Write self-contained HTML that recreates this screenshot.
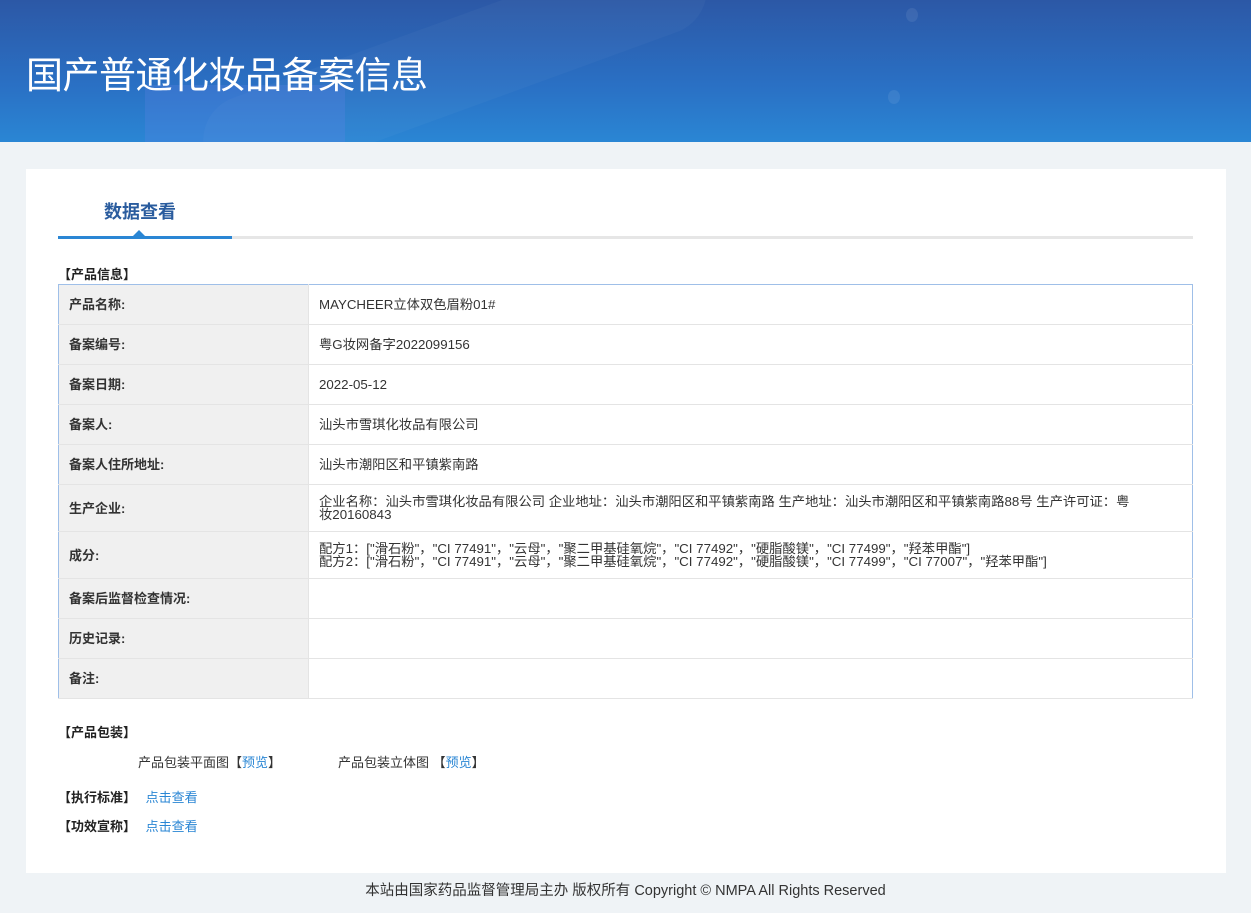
<!DOCTYPE html>
<html><head><meta charset="utf-8"><style>
*{margin:0;padding:0;box-sizing:border-box}
body{width:1251px;height:913px;background:#eff3f6;font-family:"Liberation Sans","Noto Sans CJK SC",sans-serif;color:#333;font-size:13px;position:relative;overflow:hidden}
.hdr{height:142px;background:linear-gradient(180deg,#2c58a6 0%,#2a70c4 60%,#2a86d4 100%);position:relative;overflow:hidden}
.hdr h1{position:absolute;left:26px;top:45px;color:#fff;font-size:37px;font-weight:normal;letter-spacing:-0.5px}
.card{position:absolute;left:26px;top:169px;width:1200px;height:704px;background:#fff}
.tab{position:absolute;left:78px;top:29px;color:#2a5c9e;font-weight:bold;font-size:18px}
.line{position:absolute;left:32px;top:67px;width:1135px;height:3px;background:#e6e6e6}
.line i{position:absolute;left:0;top:0;width:174px;height:3px;background:#2a86d4}
.tri{position:absolute;left:107px;top:61px;width:0;height:0;border-left:6px solid transparent;border-right:6px solid transparent;border-bottom:6px solid #2a86d4}
.sec{position:absolute;left:32px;font-weight:bold;font-size:13px;color:#222}
table{position:absolute;left:32px;top:115px;width:1135px;border-collapse:collapse;border:1px solid #9fbfe8}
td{border-bottom:1px solid #e4e4e4;height:40px;padding:0 10px;vertical-align:middle;line-height:13px;font-size:13.3px}
td.l{width:250px;background:#f0f0f0;font-weight:bold;color:#333;border-right:1px solid #e4e4e4;font-size:13px}
a{color:#2a86d4;text-decoration:none}
.foot{position:absolute;top:879px;left:0;width:1251px;text-align:center;font-size:14.5px;color:#333}
</style></head><body>
<div class="hdr">
<div style="position:absolute;left:190px;top:20px;width:530px;height:90px;background:rgba(255,255,255,.03);border-radius:45px;transform:rotate(-20deg)"></div>
<div style="position:absolute;left:145px;top:85px;width:200px;height:60px;background:rgba(100,130,230,.25)"></div>
<div style="position:absolute;left:906px;top:8px;width:12px;height:14px;border-radius:50%;background:rgba(255,255,255,.08)"></div>
<div style="position:absolute;left:888px;top:90px;width:12px;height:14px;border-radius:50%;background:rgba(255,255,255,.08)"></div>
<h1>国产普通化妆品备案信息</h1></div>
<div class="card">
<div class="tab">数据查看</div>
<div class="tri"></div>
<div class="line"><i></i></div>
<div class="sec" style="top:95px">【产品信息】</div>
<table>
<tr><td class="l">产品名称:</td><td>MAYCHEER立体双色眉粉01#</td></tr>
<tr><td class="l">备案编号:</td><td>粤G妆网备字2022099156</td></tr>
<tr><td class="l">备案日期:</td><td>2022-05-12</td></tr>
<tr><td class="l">备案人:</td><td>汕头市雪琪化妆品有限公司</td></tr>
<tr><td class="l">备案人住所地址:</td><td>汕头市潮阳区和平镇紫南路</td></tr>
<tr><td class="l" style="height:47px">生产企业:</td><td>企业名称：汕头市雪琪化妆品有限公司 企业地址：汕头市潮阳区和平镇紫南路 生产地址：汕头市潮阳区和平镇紫南路88号 生产许可证：粤<br>妆20160843</td></tr>
<tr><td class="l" style="height:47px">成分:</td><td>配方1：["滑石粉"，"CI 77491"，"云母"，"聚二甲基硅氧烷"，"CI 77492"，"硬脂酸镁"，"CI 77499"，"羟苯甲酯"]<br>配方2：["滑石粉"，"CI 77491"，"云母"，"聚二甲基硅氧烷"，"CI 77492"，"硬脂酸镁"，"CI 77499"，"CI 77007"，"羟苯甲酯"]</td></tr>
<tr><td class="l">备案后监督检查情况:</td><td></td></tr>
<tr><td class="l">历史记录:</td><td></td></tr>
<tr><td class="l">备注:</td><td></td></tr>
</table>
<div class="sec" style="top:553px">【产品包装】</div>
<div style="position:absolute;left:112px;top:583px">产品包装平面图【<a>预览</a>】</div>
<div style="position:absolute;left:312px;top:583px">产品包装立体图 【<a>预览</a>】</div>
<div class="sec" style="top:618px">【执行标准】 <a style="font-weight:normal;margin-left:6px">点击查看</a></div>
<div class="sec" style="top:647px">【功效宣称】 <a style="font-weight:normal;margin-left:6px">点击查看</a></div>
</div>
<div class="foot">本站由国家药品监督管理局主办 版权所有 Copyright © NMPA All Rights Reserved</div>
</body></html>
